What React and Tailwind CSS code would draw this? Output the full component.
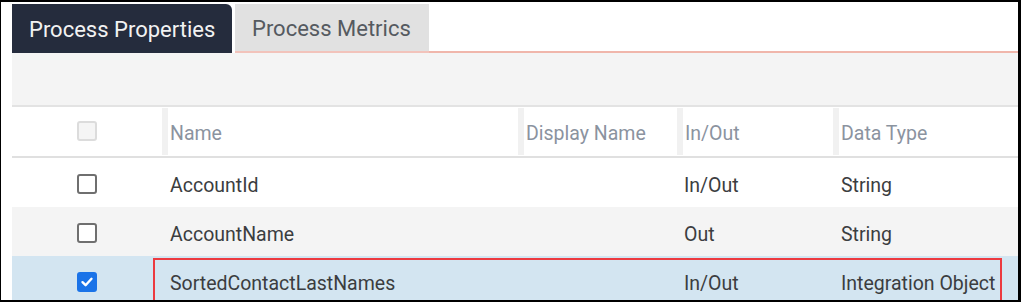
import React from 'react';

const columns = ['Name', 'Display Name', 'In/Out', 'Data Type'];

const rows = [
  { name: 'AccountId', display: '', io: 'In/Out', type: 'String', checked: false, bg: 'bg-white' },
  { name: 'AccountName', display: '', io: 'Out', type: 'String', checked: false, bg: 'bg-[#f4f4f4]' },
  { name: 'SortedContactLastNames', display: '', io: 'In/Out', type: 'Integration Object', checked: true, bg: 'bg-[#d3e5f1]', highlight: true },
];

const gridCols = 'grid grid-cols-[150px_356px_159px_156px_1fr]';

const Checkbox = ({ checked, disabled }) => {
  if (disabled) {
    return <div className="w-[20px] h-[20px] rounded-[3px] border-2 border-[#dcdcdc] bg-[#f5f5f5]" />;
  }
  if (checked) {
    return (
      <div className="w-[20px] h-[20px] rounded-[3px] bg-[#1a73e8] flex items-center justify-center">
        <svg width="14" height="14" viewBox="0 0 14 14" fill="none">
          <path d="M2.5 7.2L5.6 10.2L11.5 3.8" stroke="white" strokeWidth="2.4" strokeLinecap="round" strokeLinejoin="round" />
        </svg>
      </div>
    );
  }
  return <div className="w-[20px] h-[20px] rounded-[3px] border-2 border-[#6f6f6f] bg-white" />;
};

const App = () => {
  return (
    <div className="w-[1024px] h-[304px] bg-white font-['Roboto',sans-serif] overflow-hidden">
      <div className="w-[1021px] h-[302px] border-l border-t-2 border-r-[3px] border-b-2 border-black flex flex-col pl-[11px] pt-[2px] overflow-hidden bg-white">
        {/* Tabs */}
        <div className="flex items-stretch h-[49px] shrink-0">
          <div className="w-[220px] bg-[#252c3d] text-[#f2f2f2] text-[22px] rounded-tr-[6px] flex items-center pl-[17px] pt-[1px]">
            Process Properties
          </div>
          <div className="w-[194px] ml-[3px] bg-[#e1e1e1] text-[#555a60] text-[22px] flex items-center pl-[17px] pt-[1px] border-b-2 border-[#f2c3bb]">
            Process Metrics
          </div>
          <div className="flex-1 border-b-2 border-[#f0b6ab]" />
        </div>

        {/* Toolbar band */}
        <div className="h-[54px] shrink-0 bg-[#f4f4f4] border-b-2 border-[#e3e3e3]" />

        {/* Header */}
        <div className={`${gridCols} h-[51px] shrink-0 bg-white border-b-2 border-[#e0e0e0]`}>
          <div className="flex items-center justify-center pr-[1px] pb-[2px]">
            <Checkbox disabled />
          </div>
          {columns.map((col) => (
            <div key={col} className="flex items-stretch">
              <div className="w-[6px] my-[1px] bg-[#f1f1f1]" />
              <div className="flex items-center pl-[2px] pt-[4px] text-[19.5px] text-[#8b939f]">{col}</div>
            </div>
          ))}
        </div>

        {/* Rows */}
        {rows.map((row) => (
          <div key={row.name} className={`${gridCols} relative h-[49px] shrink-0 ${row.bg} text-[19.5px] text-[#3b3d40]`}>
            <div className="flex items-center justify-center pr-[1px] pt-[2px]">
              <Checkbox checked={row.checked} />
            </div>
            <div className="flex items-center pl-[8px] pt-[6px]">{row.name}</div>
            <div className="flex items-center pl-[8px] pt-[6px]">{row.display}</div>
            <div className="flex items-center pl-[7px] pt-[6px]">{row.io}</div>
            <div className="flex items-center pl-[8px] pt-[6px]">{row.type}</div>
            {row.highlight && (
              <div className="absolute left-[141px] top-[2px] w-[849px] h-[46px] border-2 border-[#ec3a40]" />
            )}
          </div>
        ))}
      </div>
    </div>
  );
};

export default App;
